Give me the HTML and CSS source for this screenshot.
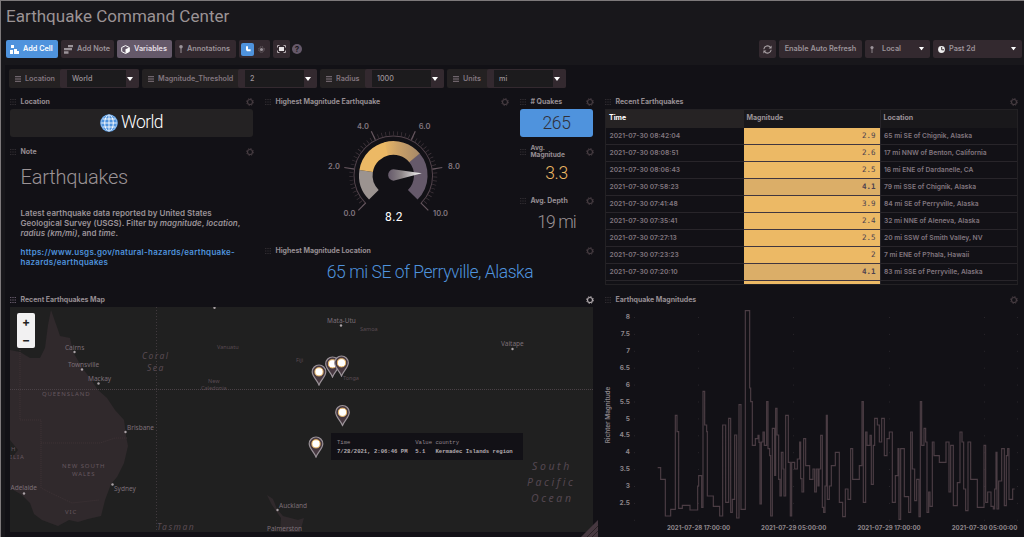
FILE: index.html
```html
<!DOCTYPE html>
<html lang="en">
<head>
<meta charset="utf-8">
<title>Earthquake Command Center</title>
<link rel="stylesheet" href="styles.css">
</head>
<body>
<svg class="defs" width="0" height="0">
  <symbol id="grip" viewBox="0 0 6 6"><path d="M0 .5h1.4M2.3 .5h1.4M4.6 .5h1.4M0 3h1.4M2.3 3h1.4M4.6 3h1.4M0 5.5h1.4M2.3 5.5h1.4M4.6 5.5h1.4" stroke="currentColor" stroke-width="1"/></symbol>
  <symbol id="gear" viewBox="0 0 8 8"><circle cx="4" cy="4" r="2.5" fill="none" stroke="currentColor" stroke-width="1.2"/><circle cx="4" cy="4" r="3.4" fill="none" stroke="currentColor" stroke-width="1" stroke-dasharray="1.4 1.27"/></symbol>
  <symbol id="lines" viewBox="0 0 6 6"><path d="M0 .7h6M0 3h6M0 5.3h6" stroke="currentColor" stroke-width="1"/></symbol>
  <symbol id="caret" viewBox="0 0 6 4"><path d="M0 0h6L3 4z" fill="currentColor"/></symbol>
  <symbol id="pinicon" viewBox="0 0 4 8"><circle cx="2" cy="1.8" r="1.8" fill="currentColor"/><path d="M2 2v6" stroke="currentColor" stroke-width="1"/></symbol>
  <symbol id="marker" viewBox="0 0 16 22"><path d="M8 21C6 16 1.2 12.500 1.200 7.800a6.800 6.800 0 0 1 13.600 0C14.800 12.500 10 16 8 21z" fill="#463840" stroke="#9b9399" stroke-width="1.2"/><circle cx="8" cy="7.800" r="4.100" fill="#fff" stroke="#ecb965" stroke-width="1"/></symbol>
</svg>

<header class="titlebar"><h1>Earthquake Command Center</h1></header>

<nav class="toolbar">
  <button class="btn primary add"><svg width="9" height="9" viewBox="0 0 9 9"><path d="M1 0h3v3H1zM0 5h3v4H0zM4 4h3v2h2v3H4z" fill="#fff"/></svg>Add Cell</button>
  <button class="btn note"><svg width="9" height="9" viewBox="0 0 9 9"><path d="M4 0h5v2.200H4zM0 3h8v2.300H0zM0 6.200h4.500v2.500H0z" fill="#9b9399"/></svg>Add Note</button>
  <button class="btn active vars"><svg width="9" height="9" viewBox="0 0 9 9"><path d="M4.500 .6L8.300 2.500v4L4.500 8.500L.7 6.500v-4z" fill="#65596a" stroke="#fff"/><path d="M4.500 4.300L8.300 2.500v4L4.500 8.500z" fill="#fff"/></svg>Variables</button>
  <button class="btn annot"><svg width="4" height="8"><use href="#pinicon"/></svg>Annotations</button>
  <div class="btn theme"><span class="moon"><svg width="6" height="6" viewBox="0 0 6 6"><path d="M1 .3H3V3.300H5.600V5.200H2L1 4z" fill="#fff"/></svg></span><span class="sun"><svg width="7" height="7" viewBox="0 0 7 7"><circle cx="3.500" cy="3.500" r="1.600" fill="#9b9399"/><circle cx="3.500" cy="3.500" r="2.700" fill="none" stroke="#8a8085" stroke-dasharray="1 1.120"/></svg></span></div>
  <button class="btn full"><svg width="9" height="8" viewBox="0 0 9 8"><path d="M2 2h5v4H2z" fill="#e8e4e6"/><path d="M.5 2.500V.5H2.500M6.500 .5H8.500V2.500M.5 5.500v2H2.500M6.500 7.500h2v-2" fill="none" stroke="#b5adb1"/></svg></button>
  <span class="help">?</span>
  <span class="spacer"></span>
  <button class="btn refresh"><svg width="9" height="9" viewBox="0 0 9 9"><path d="M.8 4.200A3.700 3.700 0 0 1 7.500 2.500M8.200 4.800A3.700 3.700 0 0 1 1.500 6.500" fill="none" stroke="#aaa2a6" stroke-width="1.100"/><path d="M8.600 .5V3.500H5.600zM.4 8.500V5.500H3.400z" fill="#aaa2a6"/></svg></button>
  <button class="btn auto">Enable Auto Refresh</button>
  <button class="btn local"><svg width="4" height="7"><use href="#pinicon"/></svg>Local<svg class="caret" width="5" height="3.500"><use href="#caret"/></svg></button>
  <button class="btn past"><svg width="7" height="7" viewBox="0 0 7 7"><circle cx="3.500" cy="3.500" r="3.400" fill="#eee"/><path d="M3.700 1v2.800H6" fill="none" stroke="#3a3035"/></svg>Past 2d<svg class="caret" width="5" height="3.500"><use href="#caret"/></svg></button>
</nav>

<main class="page">
  <div class="variables">
    <div class="var v1"><label><svg width="6" height="6"><use href="#lines"/></svg>Location</label><div class="select"><span>World</span><i><svg width="6" height="4"><use href="#caret"/></svg></i></div></div>
    <div class="var v2"><label><svg width="6" height="6"><use href="#lines"/></svg>Magnitude_Threshold</label><div class="select"><span>2</span><i><svg width="6" height="4"><use href="#caret"/></svg></i></div></div>
    <div class="var v3"><label><svg width="6" height="6"><use href="#lines"/></svg>Radius</label><div class="select"><span>1000</span><i><svg width="6" height="4"><use href="#caret"/></svg></i></div></div>
    <div class="var v4"><label><svg width="6" height="6"><use href="#lines"/></svg>Units</label><div class="select"><span>mi</span><i><svg width="6" height="4"><use href="#caret"/></svg></i></div></div>
  </div>

  <div class="dashboard">
    <div class="left">
      <div class="upper">
        <div class="info">
          <section class="cell">
            <div class="head"><svg class="grip"><use href="#grip"/></svg><h2>Location</h2><svg class="gear"><use href="#gear"/></svg></div>
            <div class="world"><svg width="18" height="18" viewBox="0 0 18 18"><circle cx="9" cy="9" r="8.800" fill="#4f93dd"/><path d="M9 1v16M1 9h16M2.500 5h13M2.500 13h13" stroke="#fff" stroke-width=".9"/><ellipse cx="9" cy="9" rx="4.300" ry="8" fill="none" stroke="#fff" stroke-width=".9"/><circle cx="9" cy="9" r="8" fill="none" stroke="#9fc4ec" stroke-width=".7"/></svg>World</div>
          </section>
          <section class="cell">
            <div class="head"><svg class="grip"><use href="#grip"/></svg><h2>Note</h2><svg class="gear"><use href="#gear"/></svg></div>
            <div class="markdown">
              <h3>Earthquakes</h3>
              <p>Latest earthquake data reported by United States<br>Geological Survey (USGS). Filter by <em>magnitude</em>, <em>location</em>,<br><em>radius (km/mi)</em>, and <em>time</em>.</p>
              <p class="link">https://www.usgs.gov/natural-hazards/earthquake-<br>hazards/earthquakes</p>
            </div>
          </section>
        </div>
        <div class="highest">
          <div class="measures">
            <section class="cell gaugecell">
              <div class="head"><svg class="grip"><use href="#grip"/></svg><h2>Highest Magnitude Earthquake</h2><svg class="gear"><use href="#gear"/></svg></div>
              <svg class="gauge" width="255" height="134" viewBox="260 108 255 134">
                <defs>
                  <linearGradient id="needle"><stop offset="0" stop-color="#65596a"/><stop offset=".4" stop-color="#8d8688"/><stop offset="1" stop-color="#fff"/></linearGradient>
                  <linearGradient id="fade" gradientUnits="userSpaceOnUse" x1="-10" y1="0" x2="27" y2="0"><stop offset="0" stop-color="#ecb965"/><stop offset=".4" stop-color="#cba167"/><stop offset="1" stop-color="#a58869"/></linearGradient>
                  <mask id="sweep" maskUnits="userSpaceOnUse" x="-60" y="-60" width="120" height="120"><rect x="-60" y="-60" width="120" height="120" fill="#fff"/><path d="M0 0V-60H60V0z" fill="#000"/></mask>
                </defs>
                <g fill="none" transform="translate(393.300 175.300)">
                  <g transform="rotate(-225)">
                    <circle r="39.300" stroke="#54454d" stroke-width="1" pathLength="360" stroke-dasharray="270 90"/>
                    <circle r="42" stroke="#43373e" stroke-width="4" pathLength="360" stroke-dasharray=".9 4.500" mask="url(#sweep)"/>
                    <circle r="27.500" stroke="#9b9390" stroke-width="13.600" pathLength="360" stroke-dasharray="54 306"/>
                    <circle r="27.500" stroke="#ecb965" stroke-width="13.600" pathLength="360" stroke-dasharray="0 54 68 238"/>
                    <circle r="27.500" stroke="#65596a" stroke-width="13.600" pathLength="360" stroke-dasharray="0 185 85 90"/>
                  </g>
                  <path d="M-7.100 -26.500A27.500 27.500 0 0 1 21.250 -17.450" stroke="url(#fade)" stroke-width="13.600"/>
                  <path d="M-27.500 27.500L-35 35M-39 -6.200L-49 -7.800M-18 -35.500L-22 -44M18 -35.500L22 -44M39 -6.200L49 -7.800M27.500 27.500L35 35" stroke="#65565e" stroke-width="1.200"/>
                  <path d="M0 -6L28.500 -2L1 5.300A5.600 5.600 0 1 1 0 -6z" fill="url(#needle)"/>
                </g>
                <g class="glabels"><text x="349.500" y="216">0.0</text><text x="334" y="169">2.0</text><text x="363" y="129">4.0</text><text x="424.500" y="129">6.0</text><text x="454" y="169">8.0</text><text x="440.500" y="216">10.0</text></g>
                <text class="gvalue" x="394" y="221">8.2</text>
              </svg>
            </section>
            <div class="stats">
              <section class="cell"><div class="head"><svg class="grip"><use href="#grip"/></svg><h2># Quakes</h2><svg class="gear"><use href="#gear"/></svg></div><div class="stat tile">265</div></section>
              <section class="cell"><div class="head"><svg class="grip"><use href="#grip"/></svg><h2 class="two">Avg.<br>Magnitude</h2><svg class="gear"><use href="#gear"/></svg></div><div class="stat warm">3.3</div></section>
              <section class="cell"><div class="head"><svg class="grip"><use href="#grip"/></svg><h2>Avg. Depth</h2><svg class="gear"><use href="#gear"/></svg></div><div class="stat depth">19 mi</div></section>
            </div>
          </div>
          <section class="cell">
            <div class="head"><svg class="grip"><use href="#grip"/></svg><h2>Highest Magnitude Location</h2><svg class="gear"><use href="#gear"/></svg></div>
            <div class="place">65 mi SE of Perryville, Alaska</div>
          </section>
        </div>
      </div>
      <section class="cell mapcell">
        <div class="head hover"><svg class="grip"><use href="#grip"/></svg><h2>Recent Earthquakes Map</h2><svg class="gear"><use href="#gear"/></svg></div>
        <div class="map">
          <svg width="583" height="225" viewBox="10 307 583 225">
            <path fill="#30292c" d="M10 350L20 352L30 358L40 358L45 348L48 325L51 310L57 327L60 336L70 338L73 352L83 369L90 378L98 390L107 398L115 410L124 420L126 436L128 446L124 463L117 477L111 484L105 500L101 516L88 519L78 522L69 520L58 526L42 520L34 514L30 503L22 495L10 488V460L18 450L10 440z"/>
            <path fill="#30292c" d="M267 495L273 499L277 509L283 516L298 520L304 518L300 532H280L281 518L272 505z"/>
            <path fill="none" stroke="#413539" stroke-width=".8" stroke-dasharray="1 1" d="M20 350V420H41V443H100L115 438L127 438M41 443V488L55 495L72 503L99 500"/>
            <path fill="none" stroke="#4a4146" stroke-width="1" stroke-dasharray="1 1" d="M10 389.500H593"/>
            <path fill="none" stroke="#40393d" stroke-width="1" stroke-dasharray="1 2" d="M156.500 307V532"/>
            <g class="towns">
              <text x="65" y="349.500">Cairns</text><text x="68" y="366.500">Townsville</text><text x="88" y="380.500">Mackay</text><text x="127" y="430">Brisbane</text><text x="114" y="491">Sydney</text><text x="10.500" y="490">Adelaide</text><text x="279" y="508">Auckland</text><text x="267" y="531">Palmerston</text>
              <text x="327" y="322.500">Mata-Utu</text><text x="501" y="346">Vaitape</text>
            </g>
            <g class="isles"><text x="360" y="331">Samoa</text><text x="217" y="349">Vanuatu</text><text x="208" y="383">New</text><text x="201" y="390">Caledonia</text><text x="296" y="362">Fiji</text><text x="343" y="380">Tonga</text></g>
            <g class="states"><text x="42" y="396">QUEENSLAND</text><text x="62" y="468">NEW SOUTH</text><text x="72" y="476">WALES</text><text x="65" y="514">VIC</text><text x="11" y="451">H</text><text x="10" y="459">ILIA</text></g>
            <g class="seas"><text x="142" y="359">Coral</text><text x="147" y="371">Sea</text><text x="157" y="530">Tasman</text></g>
            <g class="ocean"><text x="532" y="470">South</text><text x="527" y="486">Pacific</text><text x="531" y="502">Ocean</text></g>
            <g fill="#aaa2a6"><circle cx="74.500" cy="352" r="1.200"/><circle cx="82" cy="369.500" r="1.200"/><circle cx="98.500" cy="383.500" r="1.200"/><circle cx="125.500" cy="432" r="1.200"/><circle cx="112.500" cy="484.500" r="1.200"/><circle cx="24" cy="493.500" r="1.200"/><circle cx="277.500" cy="510" r="1.200"/><circle cx="214.500" cy="307.800" r="1.200"/><circle cx="341" cy="325.500" r="1.200"/><circle cx="512.500" cy="349" r="1.200"/></g>
            <use href="#marker" x="311" y="364" width="16" height="22"/><use href="#marker" x="324.500" y="356" width="16" height="22"/><use href="#marker" x="333.500" y="355" width="16" height="22"/><use href="#marker" x="334.500" y="404.500" width="16" height="22"/><use href="#marker" x="308" y="436" width="16" height="22"/>
          </svg>
          <div class="zoom"><span>+</span><span>−</span></div>
          <table class="tip"><tr><th>Time</th><th>Value</th><th>country</th></tr><tr><td>7/28/2021, 2:06:46 PM</td><td>5.1</td><td>Kermadec Islands region</td></tr></table>
          <svg class="resize" width="17" height="17" viewBox="0 0 17 17"><path d="M17 0V17H0z" fill="#463840"/><path d="M6 17L17 6M11 17L17 11" stroke="#2a2226"/></svg>
        </div>
      </section>
    </div>

    <div class="right">
      <section class="cell tablecell">
        <div class="head"><svg class="grip"><use href="#grip"/></svg><h2>Recent Earthquakes</h2><svg class="gear"><use href="#gear"/></svg></div>
        <div class="tablewrap">
          <div class="row thead"><b class="sorted">Time</b><b>Magnitude</b><b>Location</b></div>
          <div class="row"><span>2021-07-30 08:42:04</span><span>2.9</span><span>65 mi SE of Chignik, Alaska</span></div>
          <div class="row"><span>2021-07-30 08:08:51</span><span>2.6</span><span>17 mi NNW of Benton, California</span></div>
          <div class="row"><span>2021-07-30 08:06:43</span><span>2.5</span><span>16 mi ENE of Dardanelle, CA</span></div>
          <div class="row strong"><span>2021-07-30 07:58:23</span><span>4.1</span><span>79 mi SSE of Chignik, Alaska</span></div>
          <div class="row"><span>2021-07-30 07:41:48</span><span>3.9</span><span>84 mi SE of Perryville, Alaska</span></div>
          <div class="row"><span>2021-07-30 07:35:41</span><span>2.4</span><span>32 mi NNE of Aleneva, Alaska</span></div>
          <div class="row"><span>2021-07-30 07:27:13</span><span>2.5</span><span>20 mi SSW of Smith Valley, NV</span></div>
          <div class="row"><span>2021-07-30 07:23:23</span><span>2</span><span>7 mi ENE of P?hala, Hawaii</span></div>
          <div class="row strong"><span>2021-07-30 07:20:10</span><span>4.1</span><span>83 mi SSE of Perryville, Alaska</span></div>
          <div class="row"><span></span><span></span><span></span></div>
        </div>
      </section>
      <section class="cell">
        <div class="head"><svg class="grip"><use href="#grip"/></svg><h2>Earthquake Magnitudes</h2><svg class="gear"><use href="#gear"/></svg></div>
        <svg class="chart" width="424" height="231" viewBox="600 306 424 231">
          <path d="M634.500 317V521M698.500 317V521M793.500 317V521M889.500 317V521M984.500 317V521M1017.500 317V521" stroke="#29262b" stroke-dasharray="1 15.900"/>
          <g class="yticks"><text x="630" y="319.300">8</text><text x="630" y="336.200">7.5</text><text x="630" y="353.100">7</text><text x="630" y="370">6.5</text><text x="630" y="386.800">6</text><text x="630" y="403.700">5.5</text><text x="630" y="420.600">5</text><text x="630" y="437.400">4.5</text><text x="630" y="454.300">4</text><text x="630" y="471.200">3.5</text><text x="630" y="488">3</text><text x="630" y="504.900">2.5</text></g>
          <g class="xticks"><text x="698.500" y="530">2021-07-28 17:00:00</text><text x="793.700" y="530">2021-07-29 05:00:00</text><text x="889" y="530">2021-07-29 17:00:00</text><text x="984.500" y="530">2021-07-30 05:00:00</text></g>
          <text class="ytitle" transform="translate(610 415) rotate(-90)">Richter Magnitude</text>
          <g transform="translate(600 290) scale(.33333)"><path fill="none" stroke="#4b3d44" stroke-width="3.500" d="M173 533H182V568H196V678H212V658H226V376H231V425H236V655H247V646H270V660H293V588H296V557H305V652H309V304H314V405H320V425H322V618H340V649H359V678H368V405H377V637H386V385H392V667H397V628H404V435H410V684H417V344H423V658H436V62H449V294H452V335H457V466H466V446H474V436H477V457H480V642H484V456H489V426H493V466H500V335H504V476H509V497H512V678H517V415H524V556H527V355H531V435H536V568H540V618H544V487H549V537H552V618H557V376H565V517H571V678H575V517H584V537H592V507H599V456H602V566H606V606H611V446H617V527H629V568H639V537H644V606H649V537H654V588H657V537H662V436H667V652H671V667H675V588H679V376H682V628H688V588H694V527H706V487H718V637H728V680H736V597H744V628H752V476H758V568H778V527H786V335H790V637H797V426H801V466H810V436H814V583H820V466H824V385H832V405H838V456H845V385H853V497H861V446H868V426H877V637H886V557H894V476H897V688H902V476H913V620H926V667H932V426H937V537H944V632H950V568H957V680H961V335H965V466H972V415H977V456H981V667H986V606H990V649H997V456H1002V497H1018V517H1038V456H1047V606H1052V466H1060V647H1072V578H1080V426H1086V456H1091V597H1097V662H1104V456H1112V568H1132V652H1152V466H1157V637H1163V606H1173V649H1180V657H1184V597H1188V487H1191V657H1196V573H1205V476H1213V647H1219V497H1223V476H1227V628H1238V597H1244"/></g>
        </svg>
      </section>
    </div>
  </div>
</main>
</body>
</html>
```

FILE: styles.css
```css
* { box-sizing: border-box; }
body {
  margin: 0; width: 1024px; height: 537px; overflow: hidden;
  background: #18171b; color: #9b9399;
  border: solid #7d797b; border-width: 1px 0 0 1px;
  font: 500 7.2px/1 Inter, sans-serif;
}
h1, h2, h3, p { margin: 0; }
svg { display: block; flex: none; }
.defs { position: absolute; }
.titlebar { height: 39px; padding: 5px 0 0 5px; }
h1 { font: 400 17px/20px Roboto, sans-serif; letter-spacing: .02px; color: #9b9395; white-space: nowrap; }

.toolbar { display: flex; gap: 3px; height: 25px; padding: 0 2px 0 5px; align-items: flex-start; }
.btn {
  display: flex; align-items: center; height: 18px; gap: 4px; padding: 0 3px;
  border: 0; border-radius: 2px; background: #33292f; color: #9b9399;
  font: 600 7.3px/1 Inter, sans-serif; white-space: nowrap; flex: none;
}
.primary { background: #4f93dd; color: #fff; }
.active { background: #65596a; color: #e4dfe6; }
.add { width: 52px; padding-left: 4px; } .note { width: 53px; } .vars { width: 55px; padding-left: 4px; } .annot { width: 61px; padding-left: 4px; }
.theme { width: 31px; padding: 0 2px; gap: 4px; }
.moon { width: 13px; height: 13px; border-radius: 2px; background: #4f93dd; display: grid; place-items: center; }
.full { width: 17px; padding: 0; justify-content: center; }
.help { width: 10px; height: 10px; margin: 4px 0 0 -1px; border-radius: 50%; background: #65596a; color: #1a181b; text-align: center; font: 700 8px/10px Inter, sans-serif; }
.spacer { flex: 1; }
.refresh { width: 17px; padding: 0; justify-content: center; }
.auto { width: 83px; padding: 0; justify-content: center; }
.local { width: 65px; gap: 8px; padding: 0 6px 0 5px; }
.past { width: 89px; gap: 4px; padding: 0 6px 0 5px; }
.caret { margin-left: auto; color: #fff; }

.page { background: #121116; height: 472px; margin-left: 4px; padding-top: 4px; }
.variables { display: flex; gap: 3px; height: 26px; padding-left: 4px; }
.var { display: flex; height: 19px; background: #242122; border-radius: 2px; }
.var label { display: flex; flex: 1; align-items: center; gap: 4px; padding-left: 6px; color: #82767f; font-weight: 600; }
.v1 { width: 130px; } .v2 { width: 175px; } .v3 { width: 124px; } .v4 { width: 119px; }
.select { display: flex; width: 79px; padding: 1px 0 1px 7px; background: #33292f; border-radius: 2px; }
.select span { flex: 1; background: #1c1b1d; line-height: 17px; padding-left: 5px; color: #9b9399; }
.select i { width: 13px; display: flex; align-items: center; padding-left: 1px; color: #fff; }

.dashboard { display: grid; grid-template-columns: 595px 424px; }
.upper { display: grid; grid-template-columns: 255px 340px; height: 198px; }
.info { display: grid; grid-template-rows: 50px 148px; }
.highest { display: grid; grid-template-rows: 149px 49px; }
.measures { display: grid; grid-template-columns: 255px 85px; }
.stats { display: grid; grid-template-rows: 50px 49px 50px; }
.head { display: flex; align-items: center; height: 13px; padding: 0 6px 0 5px; }
.grip { width: 6px; height: 6px; margin-right: 4.500px; color: #302c31; }
.gear { width: 8px; height: 8px; margin-left: auto; color: #463c41; }
.hover .grip { color: #65596a; }
.hover .gear { color: #b0a9ac; }
h2 { font: 700 7px/8px Inter, sans-serif; letter-spacing: -.04px; color: #958d92; white-space: nowrap; }
.two { font-size: 6.600px; line-height: 7px; }

.world { display: flex; align-items: center; justify-content: center; gap: 3px; height: 28px; margin: 1px 7px 0 5px; border-radius: 3px; background: #242223; color: #fff; font: 300 17.500px/1 Roboto, sans-serif; letter-spacing: -.6px; }
.markdown { padding: 7px 0 0 15.500px; white-space: nowrap; }
h3 { font: 300 20px/24px Roboto, sans-serif; letter-spacing: -.2px; color: #9b9395; margin-bottom: 19px; }
.markdown p { font: 600 8px/10.200px Inter, sans-serif; letter-spacing: .03px; color: #9b9399; }
.markdown .link { color: #4f93dd; letter-spacing: .28px; margin-top: 8.500px; }

.glabels { font: 600 7.500px Inter, sans-serif; fill: #81767f; text-anchor: middle; }
.gvalue { font: 400 12px Roboto, sans-serif; fill: #fff; text-anchor: middle; letter-spacing: .4px; }
.stat { margin: 1px 7px 0 5px; height: 28px; text-align: center; font: 300 17.500px/28px Roboto, sans-serif; letter-spacing: -.3px; }
.tile { background: #4f93dd; color: #30303a; border-radius: 3px; }
.warm { color: #ecb965; }
.depth { color: #9b9395; letter-spacing: -.9px; }
.place { text-align: center; font: 300 17.500px/30px Roboto, sans-serif; letter-spacing: -.45px; color: #4f93dd; }

.map { position: relative; width: 583px; margin: 1px 0 0 5px; background: #202020; }
.towns { font: 6.500px "Noto Sans", sans-serif; fill: #7c6f77; }
.isles { font: 5.500px "Noto Sans", sans-serif; fill: #5a4b53; }
.states { font: 6px "Noto Sans", sans-serif; fill: #65575f; letter-spacing: .900px; }
.seas { font: italic 8.500px "Noto Sans", sans-serif; fill: #5a4b53; letter-spacing: 1.500px; }
.ocean { font: italic 10.500px "Noto Sans", sans-serif; fill: #544750; letter-spacing: 2.600px; }
.zoom { position: absolute; left: 7px; top: 6px; width: 18px; height: 35px; border-radius: 2px; background: #f2f1f2; color: #222; display: grid; text-align: center; font: 700 12px/17px Inter, sans-serif; }
.tip { position: absolute; left: 321px; top: 126px; width: 192px; height: 27px; padding: 5px 4px 4px; background: #121116; border-collapse: separate; border-spacing: 0; font: 700 5.600px/8px "Liberation Mono", monospace; color: #b5adb1; white-space: nowrap; }
.tip th { font-weight: 400; text-align: left; color: #92888e; }
.tip td, .tip th { padding: 0 0 0 2px; }
.resize { position: absolute; right: -5px; bottom: -5px; }

.tablecell { height: 198px; }
.tablewrap { margin: 1px 6px 0 5px; height: 176px; overflow: hidden; border: 1px solid #232124; }
.row { display: grid; grid-template-columns: 137.500px 136px 1fr; height: 17px; line-height: 16px; color: #81767f; white-space: nowrap; }
.row > * { border-bottom: 1px solid #28252a; padding-left: 3.500px; font-weight: 600; font-size: 6.700px; }
.row > :nth-child(2) { background: #ecb965; border-bottom-color: #40363f; color: #4b414f; text-align: right; padding-right: 4px; font: 400 7.500px/16px "DejaVu Sans Mono", monospace; }
.strong > :nth-child(2) { background: #dbae68; font-weight: 700; }
.thead { height: 18px; color: #9b9399; }
.thead > :nth-child(n) { background: #19181b; border: 0; padding-left: 3px; color: #9b9399; text-align: left; font: 700 7px/16px Inter, sans-serif; }
.thead > .sorted:nth-child(1) { background: #262324; color: #fff; }
.row > :nth-child(3) { border-left: 1px solid #28252a; }

.yticks, .xticks { font: 700 6.100px Inter, sans-serif; fill: #8d858a; }
.yticks { text-anchor: end; font-size: 6.500px; }
.xticks, .ytitle { text-anchor: middle; }
.ytitle { font: 600 6.400px Inter, sans-serif; fill: #8d858a; }
```
